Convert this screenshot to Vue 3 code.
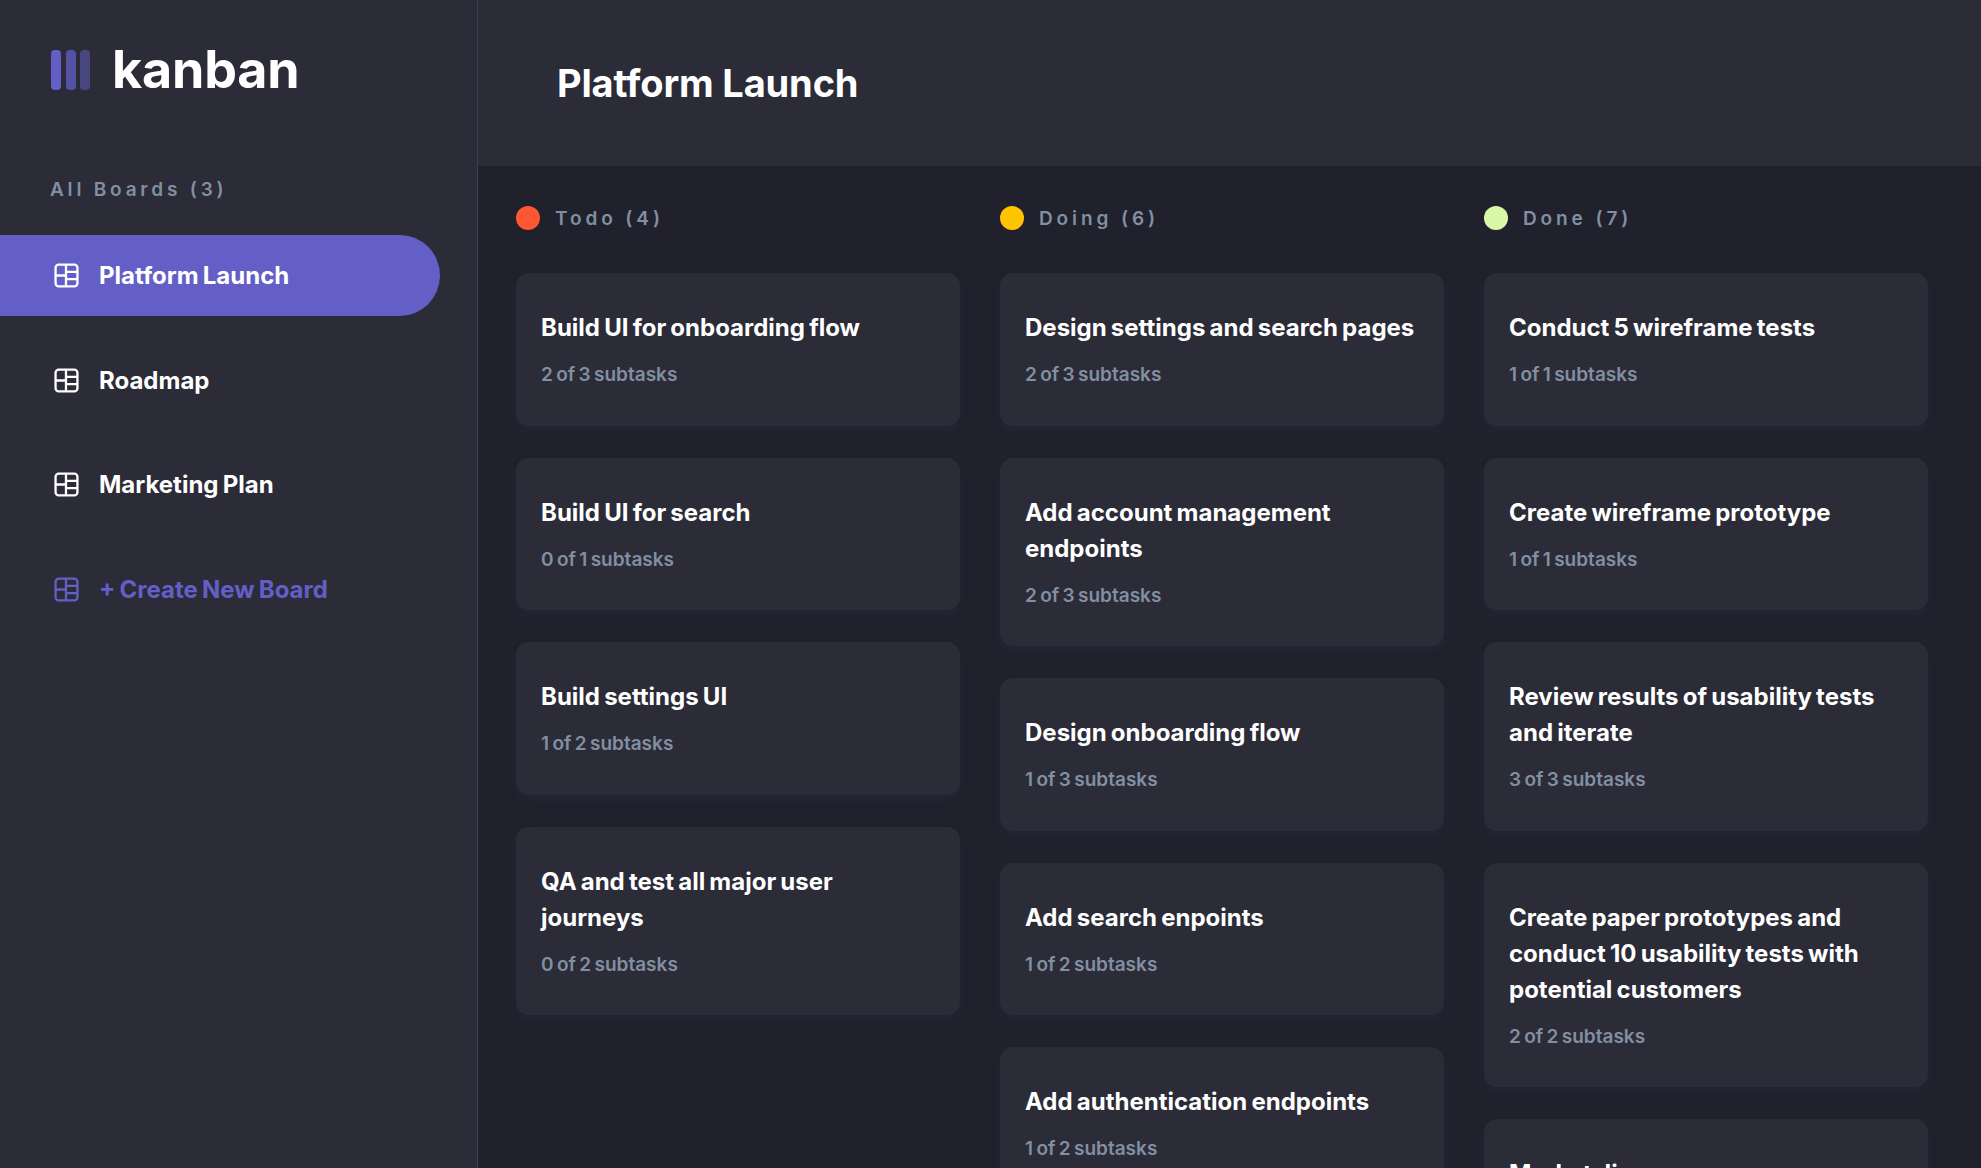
<template>
  <div class="app">
    <aside class="sidebar">
      <div class="logo">
        <div class="logo-bars">
          <span class="bar"></span>
          <span class="bar mid"></span>
          <span class="bar low"></span>
        </div>
        <span class="logo-text">kanban</span>
      </div>
      <p class="boards-label">All Boards ({{ boards.length }})</p>
      <nav class="board-list">
        <a v-for="(board, i) in boards" :key="board" class="board-link" :class="{ active: i === 0 }">
          <svg class="board-icon" viewBox="0 0 24 24" fill="none" stroke="currentColor" stroke-width="2.2">
            <rect x="1.5" y="1.5" width="21" height="21" rx="3" />
            <path d="M11.5 1.5v21M1.5 12h10M11.5 8.5h11M11.5 15.5h11" />
          </svg>
          {{ board }}
        </a>
        <a class="board-link create">
          <svg class="board-icon" viewBox="0 0 24 24" fill="none" stroke="currentColor" stroke-width="2.2">
            <rect x="1.5" y="1.5" width="21" height="21" rx="3" />
            <path d="M11.5 1.5v21M1.5 12h10M11.5 8.5h11M11.5 15.5h11" />
          </svg>
          + Create New Board
        </a>
      </nav>
    </aside>

    <main class="main">
      <header class="topbar">
        <h1>Platform Launch</h1>
      </header>
      <section class="columns">
        <div v-for="col in columns" :key="col.name" class="column">
          <h2 class="column-title">
            <span class="dot" :style="{ background: col.color }"></span>
            {{ col.name }} ({{ col.tasks.length }})
          </h2>
          <article v-for="task in col.tasks" :key="task.title" class="card">
            <h3>{{ task.title }}</h3>
            <p>{{ task.subtasks }} subtasks</p>
          </article>
        </div>
      </section>
    </main>
  </div>
</template>

<script setup>
const boards = ['Platform Launch', 'Roadmap', 'Marketing Plan'];

const columns = [
  {
    name: 'Todo',
    color: '#ff5733',
    tasks: [
      { title: 'Build UI for onboarding flow', subtasks: '2 of 3' },
      { title: 'Build UI for search', subtasks: '0 of 1' },
      { title: 'Build settings UI', subtasks: '1 of 2' },
      { title: 'QA and test all major user journeys', subtasks: '0 of 2' }
    ]
  },
  {
    name: 'Doing',
    color: '#ffc300',
    tasks: [
      { title: 'Design settings and search pages', subtasks: '2 of 3' },
      { title: 'Add account management endpoints', subtasks: '2 of 3' },
      { title: 'Design onboarding flow', subtasks: '1 of 3' },
      { title: 'Add search enpoints', subtasks: '1 of 2' },
      { title: 'Add authentication endpoints', subtasks: '1 of 2' },
      { title: 'Research pricing points of various competitors and trial different business models', subtasks: '1 of 3' }
    ]
  },
  {
    name: 'Done',
    color: '#daf7a6',
    tasks: [
      { title: 'Conduct 5 wireframe tests', subtasks: '1 of 1' },
      { title: 'Create wireframe prototype', subtasks: '1 of 1' },
      { title: 'Review results of usability tests and iterate', subtasks: '3 of 3' },
      { title: 'Create paper prototypes and conduct 10 usability tests with potential customers', subtasks: '2 of 2' },
      { title: 'Market discovery', subtasks: '1 of 1' },
      { title: 'Competitor analysis', subtasks: '2 of 2' },
      { title: 'Research the market', subtasks: '2 of 2' }
    ]
  }
];
</script>

<style>
html,
body {
  margin: 0;
  background: #20212c;
}
</style>

<style scoped>
.app {
  display: flex;
  width: 100%;
  height: 100vh;
  overflow: hidden;
  font-family: Inter, "Noto Sans", sans-serif;
  background: #20212c;
}

.sidebar {
  width: 477px;
  flex-shrink: 0;
  background: #2b2c37;
  border-right: 1px solid #3e3f4e;
}

.logo {
  display: flex;
  align-items: center;
  gap: 22px;
  padding: 50px 0 0 51px;
}

.logo-bars {
  display: flex;
  gap: 4.5px;
}

.bar {
  width: 10px;
  height: 40px;
  border-radius: 4px;
  background: #635fc7;
}

.bar.mid {
  opacity: 0.75;
}

.bar.low {
  opacity: 0.5;
}

.logo-text {
  font-size: 52px;
  line-height: 40px;
  font-weight: 700;
  color: #fff;
  letter-spacing: -0.2px;
}

.boards-label {
  margin: 88px 0 0 50px;
  font-size: 19px;
  font-weight: 600;
  letter-spacing: 3.8px;
  color: #828fa3;
}

.board-list {
  display: flex;
  flex-direction: column;
  gap: 23.5px;
  margin-top: 34px;
}

.board-link {
  display: flex;
  align-items: center;
  gap: 20px;
  width: 440px;
  height: 81px;
  box-sizing: border-box;
  padding-left: 54px;
  border-radius: 0 41px 41px 0;
  font-size: 24px;
  font-weight: 700;
  word-spacing: -1.5px;
  color: #fff;
}

.board-link.active {
  background: #635fc7;
}

.board-link.create {
  color: #635fc7;
}

.board-icon {
  width: 25px;
  height: 25px;
  flex-shrink: 0;
}

.main {
  flex: 1;
  min-width: 0;
  display: flex;
  flex-direction: column;
}

.topbar {
  height: 166px;
  flex-shrink: 0;
  display: flex;
  align-items: center;
  padding-left: 79px;
  background: #2b2c37;
}

.topbar h1 {
  margin: 0;
  font-size: 38px;
  font-weight: 700;
  letter-spacing: -0.15px;
  color: #fff;
}

.columns {
  display: flex;
  gap: 40px;
  padding: 40px 0 0 38px;
}

.column {
  width: 444px;
  display: flex;
  flex-direction: column;
  gap: 32px;
}

.column-title {
  display: flex;
  align-items: center;
  gap: 15px;
  margin: 0 0 11px;
  font-size: 19px;
  font-weight: 600;
  letter-spacing: 3.9px;
  color: #828fa3;
}

.dot {
  width: 24px;
  height: 24px;
  border-radius: 50%;
}

.card {
  padding: 37px 25px 37.5px;
  border-radius: 13px;
  background: #2b2c37;
  box-shadow: 0 5px 8px rgba(54, 78, 126, 0.1);
}

.card h3 {
  margin: 0;
  font-size: 24px;
  line-height: 36px;
  font-weight: 700;
  word-spacing: -1.5px;
  color: #fff;
}

.card p {
  margin: 16px 0 0;
  font-size: 19px;
  line-height: 26px;
  font-weight: 600;
  word-spacing: -1.4px;
  color: #828fa3;
}
</style>
